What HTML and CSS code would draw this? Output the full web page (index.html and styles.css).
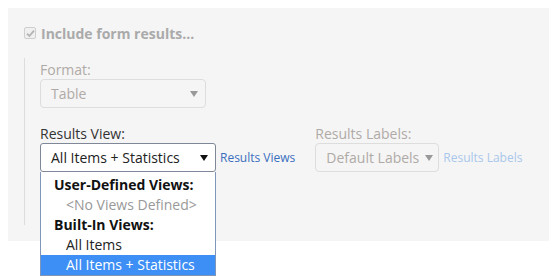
FILE: index.html
```html
<!DOCTYPE html>
<html lang="en">
<head>
  <meta charset="UTF-8">
  <title>Form results</title>
  <link rel="stylesheet" href="styles.css">
</head>
<body>
  <!-- Form results panel -->
  <div class="panel">
    <div class="include">
      <span class="checkbox">
        <svg width="9" height="9" viewBox="0 0 9 9"><path d="M1 4.6 L3.4 7 L8 1.6" fill="none" stroke="#b5b5b5" stroke-width="1.8"/></svg>
      </span>
      <span class="include-text">Include form results...</span>
    </div>

    <div class="options">
      <label class="field-label disabled">Format:</label>
      <div class="select select-format disabled">
        <span>Table</span>
        <span class="arrow"></span>
      </div>

      <div class="results-row">
        <div class="group">
          <label class="field-label">Results View:</label>
          <div class="select-line">
            <div class="dropdown">
              <div class="select select-view">
                <span>All Items + Statistics</span>
                <span class="arrow"></span>
              </div>
              <ul class="menu">
                <li class="group-title">User-Defined Views:</li>
                <li class="option muted">&lt;No Views Defined&gt;</li>
                <li class="group-title">Built-In Views:</li>
                <li class="option">All Items</li>
                <li class="option selected">All Items + Statistics</li>
              </ul>
            </div>
            <a class="link" href="#">Results Views</a>
          </div>
        </div>

        <div class="group labels-group">
          <label class="field-label disabled">Results Labels:</label>
          <div class="select-line">
            <div class="select select-labels disabled">
              <span>Default Labels</span>
              <span class="arrow"></span>
            </div>
            <a class="link link-disabled" href="#">Results Labels</a>
          </div>
        </div>
      </div>
    </div>
  </div>
</body>
</html>
```

FILE: styles.css
```css
* {
    box-sizing: border-box;
}
body {
    margin: 8px 0 0 8px;
    min-height: 270px;
    font-family: "Open Sans", Arial, sans-serif;
    font-size: 14px;
    color: #333;
}
a {
    text-decoration: none;
}
/* Panel */
.panel {
    background-color: #f5f5f5;
    padding: 14px 15px 16px 16px;
    height: 233px;
}
.include {
    display: flex;
    align-items: center;
    height: 22px;
    margin-bottom: 14px;
}
.checkbox {
    width: 12px;
    height: 12px;
    border: 1px solid #cfcfcf;
    border-radius: 2px;
    background: #f0f0f0;
    display: flex;
    align-items: center;
    justify-content: center;
    margin-right: 5px;
}
.include-text {
    font-weight: bold;
    color: #aaa;
}
/* Options under the checkbox */
.options {
    border-left: 1px solid #ddd;
    padding: 3px 0 0 15px;
    height: 167px;
}
.field-label {
    display: block;
    line-height: 18px;
    margin-bottom: 0;
}
.disabled {
    color: #b0aaa6;
}
.select {
    display: flex;
    align-items: center;
    justify-content: space-between;
    height: 29px;
    padding: 0 7px 0 10px;
    border: 1px solid #ddd;
    border-radius: 4px;
    background: #f5f5f5;
}
.select-format {
    width: 166px;
    margin-bottom: 17px;
}
.select-view {
    width: 176px;
    background: #fff;
    border-color: #7f8899;
    border-radius: 3px;
    color: #222;
}
.select-labels {
    width: 124px;
    padding-right: 5px;
}
.arrow {
    width: 0;
    height: 0;
    border-left: 4px solid transparent;
    border-right: 4px solid transparent;
    border-top: 6px solid #999;
}
.select-view .arrow {
    border-top-color: #111;
}
.results-row {
    display: flex;
}
.select-line {
    display: flex;
    align-items: center;
}
.labels-group {
    margin-left: 20px;
}
.link {
    font-size: 12px;
    color: #3a6fbf;
    margin-left: 4px;
}
.link-disabled {
    color: #a9c7ec;
}
/* Open dropdown list */
.dropdown {
    position: relative;
}
.menu {
    position: absolute;
    top: 29px;
    left: 0;
    width: 176px;
    margin: 0;
    padding: 3px 0 0 0;
    list-style: none;
    background: #fff;
    border: 1px solid #7f96b8;
    border-top: none;
}
.menu li {
    line-height: 20px;
    white-space: nowrap;
}
.group-title {
    font-weight: bold;
    color: #111;
    padding-left: 13px;
}
.option {
    padding-left: 25px;
    color: #222;
}
.option.muted {
    color: #999;
}
.option.selected {
    background: #3d8ff5;
    color: #fff;
}
```
